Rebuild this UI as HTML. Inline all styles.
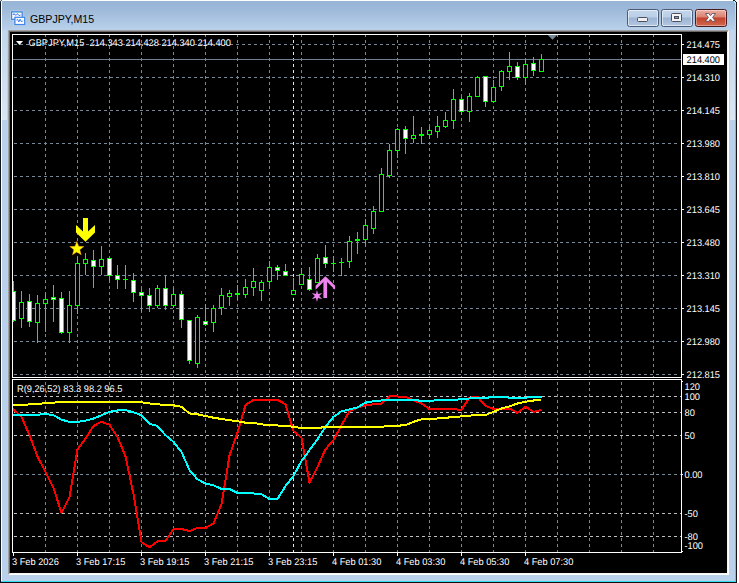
<!DOCTYPE html>
<html><head><meta charset="utf-8"><title>GBPJPY,M15</title>
<style>
html,body{margin:0;padding:0;background:#fff;}
body{width:739px;height:583px;overflow:hidden;position:relative;font-family:"Liberation Sans",Arial,sans-serif;}
#win{position:absolute;left:0;top:0;width:737px;height:583px;background:#b9d1ea;overflow:hidden;}
#tb{position:absolute;left:0;top:0;width:737px;height:30px;background:linear-gradient(#98b4d4 0px,#9cb8d8 8px,#b9d1ea 30px);}
#edgeL{position:absolute;left:0;top:2px;width:1px;bottom:0;background:#10161e;}
#edgeL2{position:absolute;left:1px;top:1px;width:1px;bottom:1px;background:#fdfeff;}
#edgeT{position:absolute;left:2px;top:0;width:731px;height:1px;background:#fdfeff;}
#edgeR{position:absolute;left:736px;top:2px;width:1px;bottom:0;background:#1a1414;}
#edgeR2{position:absolute;left:735px;top:2px;width:1px;bottom:1px;background:linear-gradient(#a8e8fa 0,#8fe2f9 30px,#3fd4f6 70px);}
#edgeB{position:absolute;left:0;top:582px;width:737px;height:1px;background:#101010;}
#edgeB2{position:absolute;left:1px;top:581px;width:735px;height:1px;background:#2fdcf2;}
#client{position:absolute;left:8px;top:30px;width:721px;height:545px;background:#000;box-sizing:border-box;border-left:1px solid #a0a0a0;border-top:1px solid #a0a0a0;border-right:1px solid #fff;border-bottom:1px solid #fff;}
#client i{position:absolute;left:0;top:0;right:0;bottom:0;border-left:1px solid #696969;border-top:1px solid #696969;border-right:1px solid #f4f4f4;border-bottom:1px solid #f4f4f4;}
#title{position:absolute;left:30px;top:8.5px;font-size:11.6px;line-height:20px;color:#000;white-space:nowrap;transform-origin:0 0;transform:scaleX(.915);}
.btn{position:absolute;top:9px;width:32px;height:18px;box-sizing:border-box;border:1px solid #4d5b76;border-radius:2.5px;background:linear-gradient(#c4d6eb 0,#bacee6 7px,#9cb4d3 8px,#b2c7e0 16px);box-shadow:inset 0 0 0 1px rgba(255,255,255,.55);}
#bmin{left:627px;} #bmax{left:661px;}
#bclose{left:695px;border-color:#4a1a22;background:linear-gradient(#eab0a2 0,#d98272 7px,#c3422a 8px,#d0694e 16px);box-shadow:inset 0 0 0 1px rgba(255,255,255,.35);}
svg{position:absolute;left:0;top:0;}
</style></head><body>
<div id="win">
<div id="tb"></div>
<div id="edgeT"></div><div id="edgeL"></div><div id="edgeL2"></div><div id="edgeR2"></div><div id="edgeR"></div><div id="edgeB2"></div><div id="edgeB"></div>
<div style="position:absolute;left:0;top:0;width:1px;height:1px;background:#cfdbe6"></div><div style="position:absolute;left:1px;top:0;width:1px;height:1px;background:#56606c"></div><div style="position:absolute;left:0;top:1px;width:1px;height:1px;background:#3a424c"></div>
<div style="position:absolute;left:733px;top:0;width:2px;height:1px;background:#121a22"></div><div style="position:absolute;left:735px;top:0;width:2px;height:2px;background:#eef2f4"></div><div style="position:absolute;left:735px;top:1px;width:1px;height:1px;background:#1a222a"></div><div style="position:absolute;left:734px;top:1px;width:1px;height:2px;background:#b5ecfb"></div>
<div id="title">GBPJPY,M15</div>
<div class="btn" id="bmin"></div><div class="btn" id="bmax"></div><div class="btn" id="bclose"></div>
<div style="position:absolute;left:2px;top:30px;width:5px;height:90px;background:linear-gradient(rgba(255,255,255,.12),rgba(255,255,255,.46))"></div><div style="position:absolute;left:730px;top:30px;width:5px;height:90px;background:linear-gradient(rgba(255,255,255,.12),rgba(255,255,255,.46))"></div>
<div id="client"><i></i></div>
</div>
<svg width="739" height="583" viewBox="0 0 739 583">
<!-- window icon -->
<g>
<rect x="10.2" y="10.6" width="13.2" height="9.8" rx="1" fill="#c8daf4" opacity=".55"/>
<rect x="13.4" y="16" width="12.6" height="9.6" rx="1" fill="#c8daf4" opacity=".55"/>
<rect x="11.6" y="11.9" width="10.6" height="7.4" fill="#fff" stroke="#3f7ef5" stroke-width="1.2"/>
<rect x="11.6" y="11.9" width="10.6" height="7.4" fill="none" stroke="#3fae86" stroke-width="1.2" stroke-dasharray="1 1.2" opacity=".45"/>
<rect x="14.9" y="17.3" width="9.8" height="7.2" fill="#fff" stroke="#3f7ef5" stroke-width="1.2"/>
<rect x="14.9" y="17.3" width="9.8" height="7.2" fill="none" stroke="#3fae86" stroke-width="1.2" stroke-dasharray="1 1.2" opacity=".45"/>
<polyline points="13,15 14,13.6 15,15 16.5,15 17.5,13.6 19,15.6 20.5,15.2" fill="none" stroke="#3f7ef5" stroke-width="1"/>
<polyline points="16.4,20 17.6,19.2 18.8,22 20.2,19.2 21.6,22 22.8,20.6" fill="none" stroke="#3f7ef5" stroke-width="1"/>
</g>
<!-- button glyphs -->
<rect x="637.5" y="17.5" width="10" height="4" rx="1" fill="#f0f0f0" stroke="#4a4e5e"/>
<rect x="671.5" y="13.5" width="10" height="8" rx="1" fill="#f4f4f4" stroke="#4a4e5e"/>
<rect x="674.5" y="16.5" width="4" height="2" fill="#7f98bd" stroke="#4a4e5e"/>
<path d="M705.5 13.5 L708.7 13.5 L710.5 15.7 L712.3 13.5 L715.5 13.5 L712.6 17.4 L715.5 21.3 L712.3 21.3 L710.5 19.1 L708.7 21.3 L705.5 21.3 L708.4 17.4 Z" fill="#fff" stroke="#5d4a58" stroke-width="0.85" stroke-linejoin="round"/>
<g shape-rendering="crispEdges">
<line x1="45.5" y1="35" x2="45.5" y2="377" stroke="#778899" stroke-dasharray="3 3" stroke-dashoffset="1"/>
<line x1="45.5" y1="380" x2="45.5" y2="552" stroke="#778899" stroke-dasharray="3 3" stroke-dashoffset="4"/>
<line x1="77.5" y1="35" x2="77.5" y2="377" stroke="#778899" stroke-dasharray="3 3" stroke-dashoffset="1"/>
<line x1="77.5" y1="380" x2="77.5" y2="552" stroke="#778899" stroke-dasharray="3 3" stroke-dashoffset="4"/>
<line x1="109.5" y1="35" x2="109.5" y2="377" stroke="#778899" stroke-dasharray="3 3" stroke-dashoffset="1"/>
<line x1="109.5" y1="380" x2="109.5" y2="552" stroke="#778899" stroke-dasharray="3 3" stroke-dashoffset="4"/>
<line x1="141.5" y1="35" x2="141.5" y2="377" stroke="#778899" stroke-dasharray="3 3" stroke-dashoffset="1"/>
<line x1="141.5" y1="380" x2="141.5" y2="552" stroke="#778899" stroke-dasharray="3 3" stroke-dashoffset="4"/>
<line x1="173.5" y1="35" x2="173.5" y2="377" stroke="#778899" stroke-dasharray="3 3" stroke-dashoffset="1"/>
<line x1="173.5" y1="380" x2="173.5" y2="552" stroke="#778899" stroke-dasharray="3 3" stroke-dashoffset="4"/>
<line x1="205.5" y1="35" x2="205.5" y2="377" stroke="#778899" stroke-dasharray="3 3" stroke-dashoffset="1"/>
<line x1="205.5" y1="380" x2="205.5" y2="552" stroke="#778899" stroke-dasharray="3 3" stroke-dashoffset="4"/>
<line x1="237.5" y1="35" x2="237.5" y2="377" stroke="#778899" stroke-dasharray="3 3" stroke-dashoffset="1"/>
<line x1="237.5" y1="380" x2="237.5" y2="552" stroke="#778899" stroke-dasharray="3 3" stroke-dashoffset="4"/>
<line x1="269.5" y1="35" x2="269.5" y2="377" stroke="#778899" stroke-dasharray="3 3" stroke-dashoffset="1"/>
<line x1="269.5" y1="380" x2="269.5" y2="552" stroke="#778899" stroke-dasharray="3 3" stroke-dashoffset="4"/>
<line x1="301.5" y1="35" x2="301.5" y2="377" stroke="#778899" stroke-dasharray="3 3" stroke-dashoffset="1"/>
<line x1="301.5" y1="380" x2="301.5" y2="552" stroke="#778899" stroke-dasharray="3 3" stroke-dashoffset="4"/>
<line x1="333.5" y1="35" x2="333.5" y2="377" stroke="#778899" stroke-dasharray="3 3" stroke-dashoffset="1"/>
<line x1="333.5" y1="380" x2="333.5" y2="552" stroke="#778899" stroke-dasharray="3 3" stroke-dashoffset="4"/>
<line x1="365.5" y1="35" x2="365.5" y2="377" stroke="#778899" stroke-dasharray="3 3" stroke-dashoffset="1"/>
<line x1="365.5" y1="380" x2="365.5" y2="552" stroke="#778899" stroke-dasharray="3 3" stroke-dashoffset="4"/>
<line x1="397.5" y1="35" x2="397.5" y2="377" stroke="#778899" stroke-dasharray="3 3" stroke-dashoffset="1"/>
<line x1="397.5" y1="380" x2="397.5" y2="552" stroke="#778899" stroke-dasharray="3 3" stroke-dashoffset="4"/>
<line x1="429.5" y1="35" x2="429.5" y2="377" stroke="#778899" stroke-dasharray="3 3" stroke-dashoffset="1"/>
<line x1="429.5" y1="380" x2="429.5" y2="552" stroke="#778899" stroke-dasharray="3 3" stroke-dashoffset="4"/>
<line x1="461.5" y1="35" x2="461.5" y2="377" stroke="#778899" stroke-dasharray="3 3" stroke-dashoffset="1"/>
<line x1="461.5" y1="380" x2="461.5" y2="552" stroke="#778899" stroke-dasharray="3 3" stroke-dashoffset="4"/>
<line x1="493.5" y1="35" x2="493.5" y2="377" stroke="#778899" stroke-dasharray="3 3" stroke-dashoffset="1"/>
<line x1="493.5" y1="380" x2="493.5" y2="552" stroke="#778899" stroke-dasharray="3 3" stroke-dashoffset="4"/>
<line x1="525.5" y1="35" x2="525.5" y2="377" stroke="#778899" stroke-dasharray="3 3" stroke-dashoffset="1"/>
<line x1="525.5" y1="380" x2="525.5" y2="552" stroke="#778899" stroke-dasharray="3 3" stroke-dashoffset="4"/>
<line x1="557.5" y1="35" x2="557.5" y2="377" stroke="#778899" stroke-dasharray="3 3" stroke-dashoffset="1"/>
<line x1="557.5" y1="380" x2="557.5" y2="552" stroke="#778899" stroke-dasharray="3 3" stroke-dashoffset="4"/>
<line x1="589.5" y1="35" x2="589.5" y2="377" stroke="#778899" stroke-dasharray="3 3" stroke-dashoffset="1"/>
<line x1="589.5" y1="380" x2="589.5" y2="552" stroke="#778899" stroke-dasharray="3 3" stroke-dashoffset="4"/>
<line x1="621.5" y1="35" x2="621.5" y2="377" stroke="#778899" stroke-dasharray="3 3" stroke-dashoffset="1"/>
<line x1="621.5" y1="380" x2="621.5" y2="552" stroke="#778899" stroke-dasharray="3 3" stroke-dashoffset="4"/>
<line x1="653.5" y1="35" x2="653.5" y2="377" stroke="#778899" stroke-dasharray="3 3" stroke-dashoffset="1"/>
<line x1="653.5" y1="380" x2="653.5" y2="552" stroke="#778899" stroke-dasharray="3 3" stroke-dashoffset="4"/>
<line x1="293.5" y1="35" x2="293.5" y2="377" stroke="#e6e6e6" stroke-dasharray="3 3" stroke-dashoffset="1"/>
<line x1="293.5" y1="380" x2="293.5" y2="552" stroke="#e6e6e6" stroke-dasharray="3 3" stroke-dashoffset="4"/>
<line x1="13" y1="44.5" x2="680" y2="44.5" stroke="#778899" stroke-dasharray="3 3" stroke-dashoffset="5"/>
<line x1="13" y1="77.5" x2="680" y2="77.5" stroke="#778899" stroke-dasharray="3 3" stroke-dashoffset="5"/>
<line x1="13" y1="110.5" x2="680" y2="110.5" stroke="#778899" stroke-dasharray="3 3" stroke-dashoffset="5"/>
<line x1="13" y1="143.5" x2="680" y2="143.5" stroke="#778899" stroke-dasharray="3 3" stroke-dashoffset="5"/>
<line x1="13" y1="176.5" x2="680" y2="176.5" stroke="#778899" stroke-dasharray="3 3" stroke-dashoffset="5"/>
<line x1="13" y1="209.5" x2="680" y2="209.5" stroke="#778899" stroke-dasharray="3 3" stroke-dashoffset="5"/>
<line x1="13" y1="242.5" x2="680" y2="242.5" stroke="#778899" stroke-dasharray="3 3" stroke-dashoffset="5"/>
<line x1="13" y1="275.5" x2="680" y2="275.5" stroke="#778899" stroke-dasharray="3 3" stroke-dashoffset="5"/>
<line x1="13" y1="308.5" x2="680" y2="308.5" stroke="#778899" stroke-dasharray="3 3" stroke-dashoffset="5"/>
<line x1="13" y1="341.5" x2="680" y2="341.5" stroke="#778899" stroke-dasharray="3 3" stroke-dashoffset="5"/>
<line x1="13" y1="374.5" x2="680" y2="374.5" stroke="#778899" stroke-dasharray="3 3" stroke-dashoffset="5"/>
<line x1="13" y1="396.5" x2="681" y2="396.5" stroke="#c0c0c0" stroke-dasharray="3 3" stroke-dashoffset="5"/>
<line x1="13" y1="412.5" x2="681" y2="412.5" stroke="#c0c0c0" stroke-dasharray="3 3" stroke-dashoffset="5"/>
<line x1="13" y1="435.5" x2="681" y2="435.5" stroke="#c0c0c0" stroke-dasharray="3 3" stroke-dashoffset="5"/>
<line x1="13" y1="474.5" x2="681" y2="474.5" stroke="#778899" stroke-dasharray="3 3" stroke-dashoffset="5"/>
<line x1="13" y1="513.5" x2="681" y2="513.5" stroke="#c0c0c0" stroke-dasharray="3 3" stroke-dashoffset="5"/>
<line x1="13" y1="536.5" x2="681" y2="536.5" stroke="#c0c0c0" stroke-dasharray="3 3" stroke-dashoffset="5"/>
<rect x="13" y="59" width="668" height="1" fill="#708090"/>
<rect x="13" y="281" width="1" height="41" fill="#00ff00"/>
<rect x="13" y="291" width="3" height="30" fill="#00ff00"/>
<rect x="13" y="292" width="2" height="28" fill="#fff"/>
<rect x="21" y="291" width="1" height="37" fill="#00ff00"/>
<rect x="19" y="302" width="5" height="17" fill="#00ff00"/>
<rect x="20" y="303" width="3" height="15" fill="#000"/>
<rect x="29" y="294" width="1" height="33" fill="#00ff00"/>
<rect x="27" y="301" width="5" height="21" fill="#00ff00"/>
<rect x="28" y="302" width="3" height="19" fill="#fff"/>
<rect x="37" y="295" width="1" height="48" fill="#00ff00"/>
<rect x="35" y="303" width="5" height="20" fill="#00ff00"/>
<rect x="36" y="304" width="3" height="18" fill="#000"/>
<rect x="45" y="293" width="1" height="39" fill="#00ff00"/>
<rect x="43" y="299" width="5" height="5" fill="#00ff00"/>
<rect x="44" y="300" width="3" height="3" fill="#000"/>
<rect x="53" y="285" width="1" height="37" fill="#00ff00"/>
<rect x="51" y="297" width="5" height="3" fill="#00ff00"/>
<rect x="52" y="298" width="3" height="1" fill="#fff"/>
<rect x="61" y="292" width="1" height="42" fill="#00ff00"/>
<rect x="59" y="298" width="5" height="35" fill="#00ff00"/>
<rect x="60" y="299" width="3" height="33" fill="#fff"/>
<rect x="69" y="291" width="1" height="52" fill="#00ff00"/>
<rect x="67" y="305" width="5" height="28" fill="#00ff00"/>
<rect x="68" y="306" width="3" height="26" fill="#000"/>
<rect x="77" y="257" width="1" height="57" fill="#00ff00"/>
<rect x="75" y="263" width="5" height="43" fill="#00ff00"/>
<rect x="76" y="264" width="3" height="41" fill="#000"/>
<rect x="85" y="253" width="1" height="22" fill="#00ff00"/>
<rect x="83" y="259" width="5" height="5" fill="#00ff00"/>
<rect x="84" y="260" width="3" height="3" fill="#000"/>
<rect x="93" y="250" width="1" height="38" fill="#00ff00"/>
<rect x="91" y="260" width="5" height="7" fill="#00ff00"/>
<rect x="92" y="261" width="3" height="5" fill="#fff"/>
<rect x="101" y="246" width="1" height="29" fill="#00ff00"/>
<rect x="99" y="259" width="5" height="8" fill="#00ff00"/>
<rect x="100" y="260" width="3" height="6" fill="#000"/>
<rect x="109" y="258" width="1" height="23" fill="#00ff00"/>
<rect x="107" y="258" width="5" height="18" fill="#00ff00"/>
<rect x="108" y="259" width="3" height="16" fill="#fff"/>
<rect x="117" y="265" width="1" height="24" fill="#00ff00"/>
<rect x="115" y="275" width="5" height="5" fill="#00ff00"/>
<rect x="116" y="276" width="3" height="3" fill="#fff"/>
<rect x="125" y="265" width="1" height="24" fill="#00ff00"/>
<rect x="123" y="279" width="5" height="1" fill="#00ff00"/>
<rect x="133" y="273" width="1" height="29" fill="#00ff00"/>
<rect x="131" y="280" width="5" height="13" fill="#00ff00"/>
<rect x="132" y="281" width="3" height="11" fill="#fff"/>
<rect x="141" y="289" width="1" height="23" fill="#00ff00"/>
<rect x="139" y="292" width="5" height="4" fill="#00ff00"/>
<rect x="140" y="293" width="3" height="2" fill="#fff"/>
<rect x="149" y="288" width="1" height="24" fill="#00ff00"/>
<rect x="147" y="295" width="5" height="11" fill="#00ff00"/>
<rect x="148" y="296" width="3" height="9" fill="#fff"/>
<rect x="157" y="285" width="1" height="23" fill="#00ff00"/>
<rect x="155" y="288" width="5" height="18" fill="#00ff00"/>
<rect x="156" y="289" width="3" height="16" fill="#000"/>
<rect x="165" y="275" width="1" height="35" fill="#00ff00"/>
<rect x="163" y="288" width="5" height="18" fill="#00ff00"/>
<rect x="164" y="289" width="3" height="16" fill="#fff"/>
<rect x="173" y="288" width="1" height="20" fill="#00ff00"/>
<rect x="171" y="294" width="5" height="12" fill="#00ff00"/>
<rect x="172" y="295" width="3" height="10" fill="#000"/>
<rect x="181" y="291" width="1" height="37" fill="#00ff00"/>
<rect x="179" y="294" width="5" height="26" fill="#00ff00"/>
<rect x="180" y="295" width="3" height="24" fill="#fff"/>
<rect x="189" y="320" width="1" height="44" fill="#00ff00"/>
<rect x="187" y="320" width="5" height="41" fill="#00ff00"/>
<rect x="188" y="321" width="3" height="39" fill="#fff"/>
<rect x="197" y="315" width="1" height="53" fill="#00ff00"/>
<rect x="195" y="317" width="5" height="47" fill="#00ff00"/>
<rect x="196" y="318" width="3" height="45" fill="#000"/>
<rect x="205" y="304" width="1" height="22" fill="#00ff00"/>
<rect x="203" y="321" width="5" height="4" fill="#00ff00"/>
<rect x="204" y="322" width="3" height="2" fill="#fff"/>
<rect x="213" y="305" width="1" height="27" fill="#00ff00"/>
<rect x="211" y="308" width="5" height="15" fill="#00ff00"/>
<rect x="212" y="309" width="3" height="13" fill="#000"/>
<rect x="221" y="288" width="1" height="27" fill="#00ff00"/>
<rect x="219" y="295" width="5" height="13" fill="#00ff00"/>
<rect x="220" y="296" width="3" height="11" fill="#000"/>
<rect x="229" y="290" width="1" height="16" fill="#00ff00"/>
<rect x="227" y="293" width="5" height="4" fill="#00ff00"/>
<rect x="228" y="294" width="3" height="2" fill="#000"/>
<rect x="237" y="285" width="1" height="15" fill="#00ff00"/>
<rect x="235" y="293" width="5" height="2" fill="#00ff00"/>
<rect x="245" y="279" width="1" height="19" fill="#00ff00"/>
<rect x="243" y="287" width="5" height="8" fill="#00ff00"/>
<rect x="244" y="288" width="3" height="6" fill="#000"/>
<rect x="253" y="268" width="1" height="28" fill="#00ff00"/>
<rect x="251" y="281" width="5" height="7" fill="#00ff00"/>
<rect x="252" y="282" width="3" height="5" fill="#000"/>
<rect x="261" y="280" width="1" height="21" fill="#00ff00"/>
<rect x="259" y="282" width="5" height="9" fill="#00ff00"/>
<rect x="260" y="283" width="3" height="7" fill="#000"/>
<rect x="269" y="261" width="1" height="28" fill="#00ff00"/>
<rect x="267" y="267" width="5" height="15" fill="#00ff00"/>
<rect x="268" y="268" width="3" height="13" fill="#000"/>
<rect x="277" y="265" width="1" height="15" fill="#00ff00"/>
<rect x="275" y="267" width="5" height="4" fill="#00ff00"/>
<rect x="276" y="268" width="3" height="2" fill="#fff"/>
<rect x="285" y="264" width="1" height="12" fill="#00ff00"/>
<rect x="283" y="271" width="5" height="5" fill="#00ff00"/>
<rect x="284" y="272" width="3" height="3" fill="#fff"/>
<rect x="293" y="278" width="1" height="17" fill="#00ff00"/>
<rect x="291" y="290" width="5" height="5" fill="#00ff00"/>
<rect x="292" y="291" width="3" height="3" fill="#000"/>
<rect x="301" y="268" width="1" height="17" fill="#00ff00"/>
<rect x="299" y="274" width="5" height="11" fill="#00ff00"/>
<rect x="300" y="275" width="3" height="9" fill="#000"/>
<rect x="309" y="267" width="1" height="24" fill="#00ff00"/>
<rect x="307" y="279" width="5" height="11" fill="#00ff00"/>
<rect x="308" y="280" width="3" height="9" fill="#fff"/>
<rect x="317" y="254" width="1" height="29" fill="#00ff00"/>
<rect x="315" y="258" width="5" height="25" fill="#00ff00"/>
<rect x="316" y="259" width="3" height="23" fill="#000"/>
<rect x="325" y="245" width="1" height="23" fill="#00ff00"/>
<rect x="323" y="257" width="5" height="7" fill="#00ff00"/>
<rect x="324" y="258" width="3" height="5" fill="#fff"/>
<rect x="333" y="256" width="1" height="16" fill="#00ff00"/>
<rect x="331" y="263" width="5" height="1" fill="#00ff00"/>
<rect x="341" y="258" width="1" height="18" fill="#00ff00"/>
<rect x="339" y="262" width="5" height="1" fill="#00ff00"/>
<rect x="349" y="236" width="1" height="32" fill="#00ff00"/>
<rect x="347" y="241" width="5" height="21" fill="#00ff00"/>
<rect x="348" y="242" width="3" height="19" fill="#000"/>
<rect x="357" y="232" width="1" height="22" fill="#00ff00"/>
<rect x="355" y="239" width="5" height="2" fill="#00ff00"/>
<rect x="365" y="219" width="1" height="26" fill="#00ff00"/>
<rect x="363" y="225" width="5" height="15" fill="#00ff00"/>
<rect x="364" y="226" width="3" height="13" fill="#000"/>
<rect x="373" y="206" width="1" height="28" fill="#00ff00"/>
<rect x="371" y="211" width="5" height="18" fill="#00ff00"/>
<rect x="372" y="212" width="3" height="16" fill="#000"/>
<rect x="381" y="168" width="1" height="44" fill="#00ff00"/>
<rect x="379" y="174" width="5" height="38" fill="#00ff00"/>
<rect x="380" y="175" width="3" height="36" fill="#000"/>
<rect x="389" y="144" width="1" height="34" fill="#00ff00"/>
<rect x="387" y="150" width="5" height="26" fill="#00ff00"/>
<rect x="388" y="151" width="3" height="24" fill="#000"/>
<rect x="397" y="128" width="1" height="30" fill="#00ff00"/>
<rect x="395" y="129" width="5" height="22" fill="#00ff00"/>
<rect x="396" y="130" width="3" height="20" fill="#000"/>
<rect x="405" y="126" width="1" height="28" fill="#00ff00"/>
<rect x="403" y="129" width="5" height="10" fill="#00ff00"/>
<rect x="404" y="130" width="3" height="8" fill="#fff"/>
<rect x="413" y="116" width="1" height="27" fill="#00ff00"/>
<rect x="411" y="135" width="5" height="4" fill="#00ff00"/>
<rect x="412" y="136" width="3" height="2" fill="#000"/>
<rect x="421" y="127" width="1" height="17" fill="#00ff00"/>
<rect x="419" y="134" width="5" height="2" fill="#00ff00"/>
<rect x="429" y="127" width="1" height="12" fill="#00ff00"/>
<rect x="427" y="130" width="5" height="5" fill="#00ff00"/>
<rect x="428" y="131" width="3" height="3" fill="#000"/>
<rect x="437" y="116" width="1" height="22" fill="#00ff00"/>
<rect x="435" y="126" width="5" height="6" fill="#00ff00"/>
<rect x="436" y="127" width="3" height="4" fill="#000"/>
<rect x="445" y="112" width="1" height="16" fill="#00ff00"/>
<rect x="443" y="120" width="5" height="7" fill="#00ff00"/>
<rect x="444" y="121" width="3" height="5" fill="#000"/>
<rect x="453" y="89" width="1" height="40" fill="#00ff00"/>
<rect x="451" y="99" width="5" height="22" fill="#00ff00"/>
<rect x="452" y="100" width="3" height="20" fill="#000"/>
<rect x="461" y="97" width="1" height="18" fill="#00ff00"/>
<rect x="459" y="99" width="5" height="13" fill="#00ff00"/>
<rect x="460" y="100" width="3" height="11" fill="#fff"/>
<rect x="469" y="93" width="1" height="29" fill="#00ff00"/>
<rect x="467" y="96" width="5" height="16" fill="#00ff00"/>
<rect x="468" y="97" width="3" height="14" fill="#000"/>
<rect x="477" y="76" width="1" height="21" fill="#00ff00"/>
<rect x="475" y="77" width="5" height="20" fill="#00ff00"/>
<rect x="476" y="78" width="3" height="18" fill="#000"/>
<rect x="485" y="76" width="1" height="31" fill="#00ff00"/>
<rect x="483" y="76" width="5" height="26" fill="#00ff00"/>
<rect x="484" y="77" width="3" height="24" fill="#fff"/>
<rect x="493" y="80" width="1" height="23" fill="#00ff00"/>
<rect x="491" y="87" width="5" height="15" fill="#00ff00"/>
<rect x="492" y="88" width="3" height="13" fill="#000"/>
<rect x="501" y="70" width="1" height="21" fill="#00ff00"/>
<rect x="499" y="71" width="5" height="16" fill="#00ff00"/>
<rect x="500" y="72" width="3" height="14" fill="#000"/>
<rect x="509" y="52" width="1" height="28" fill="#00ff00"/>
<rect x="507" y="66" width="5" height="6" fill="#00ff00"/>
<rect x="508" y="67" width="3" height="4" fill="#000"/>
<rect x="517" y="62" width="1" height="18" fill="#00ff00"/>
<rect x="515" y="66" width="5" height="12" fill="#00ff00"/>
<rect x="516" y="67" width="3" height="10" fill="#fff"/>
<rect x="525" y="59" width="1" height="26" fill="#00ff00"/>
<rect x="523" y="64" width="5" height="14" fill="#00ff00"/>
<rect x="524" y="65" width="3" height="12" fill="#000"/>
<rect x="533" y="57" width="1" height="19" fill="#00ff00"/>
<rect x="531" y="63" width="5" height="8" fill="#00ff00"/>
<rect x="532" y="64" width="3" height="6" fill="#fff"/>
<rect x="541" y="54" width="1" height="18" fill="#00ff00"/>
<rect x="539" y="59" width="5" height="13" fill="#00ff00"/>
<rect x="540" y="60" width="3" height="11" fill="#000"/>
<polyline points="13,409.3 13.5,409.3 21.5,416.8 29.5,435.2 37.5,456.5 45.5,472 53.5,487.7 61.5,513.0 69.5,496.8 77.5,449.5 85.5,438.5 93.5,426 101.5,421.8 109.5,424.8 117.5,436.8 125.5,456.5 133.5,494 141.5,542.3 149.5,547.3 157.5,541.3 165.5,541 173.5,529 181.5,529 189.5,531 197.5,528 205.5,528 213.5,523.5 221.5,504.3 229.5,455.5 237.5,432.7 245.5,405 253.5,399.8 261.5,399.8 269.5,399.8 277.5,399.8 285.5,404.3 293.5,431 301.5,437.7 309.5,482.7 317.5,467 325.5,449.3 333.5,440.2 341.5,425.2 349.5,411.3 357.5,407.7 365.5,405.2 373.5,404.3 381.5,403.8 389.5,396.3 397.5,396.5 405.5,396.8 413.5,400.2 421.5,403.5 429.5,409 437.5,409 445.5,409 453.5,409.3 461.5,409.8 469.5,397.7 477.5,396.8 485.5,406 493.5,408.8 501.5,408.8 509.5,408.5 517.5,413 525.5,406.8 533.5,411.8 541.5,409.8" fill="none" stroke="#ff0000" stroke-width="2" stroke-linejoin="round"/>
<polyline points="13,415.2 13.5,415.2 21.5,415.2 29.5,415.2 37.5,414.8 45.5,414 53.5,415.2 61.5,419.7 69.5,421.8 77.5,421.8 85.5,420.7 93.5,418.5 101.5,415.2 109.5,411.8 117.5,410.5 125.5,410.2 133.5,412.3 141.5,415.2 149.5,423.8 157.5,426 165.5,435.2 173.5,441.8 181.5,452 189.5,470 197.5,479.3 205.5,483.5 213.5,485.2 221.5,489 229.5,489 237.5,493 245.5,493 253.5,493.5 261.5,494.3 269.5,499 277.5,499 285.5,486 293.5,476 301.5,461 309.5,450.2 317.5,439.3 325.5,426.8 333.5,416.8 341.5,411.3 349.5,409.3 357.5,407.3 365.5,402.7 373.5,401.3 381.5,400.5 389.5,399.7 397.5,399.7 405.5,399.7 413.5,399.7 421.5,401 429.5,401 437.5,400.2 445.5,399.8 453.5,399.8 461.5,399.3 469.5,398.5 477.5,398.2 485.5,397.7 493.5,397.2 501.5,396.8 509.5,397.7 517.5,397.7 525.5,397.7 533.5,396.8 541.5,396.8" fill="none" stroke="#00ffff" stroke-width="2" stroke-linejoin="round"/>
<polyline points="13,405.2 13.5,405.2 21.5,405.0 29.5,404.4 37.5,403.9 45.5,403.2 53.5,402.6 61.5,402 69.5,401.8 77.5,401.8 85.5,401.8 93.5,401.8 101.5,401.8 109.5,401.8 117.5,401.8 125.5,401.8 133.5,401.8 141.5,402.2 149.5,403.5 157.5,404.3 165.5,405 173.5,405.3 181.5,406.8 189.5,413.5 197.5,414.3 205.5,416 213.5,417.7 221.5,419 229.5,420.2 237.5,421.3 245.5,422.7 253.5,423 261.5,424.3 269.5,425.2 277.5,425.5 285.5,426 293.5,426.8 301.5,428 309.5,428.2 317.5,428.2 325.5,426.8 333.5,426.8 341.5,426.8 349.5,426.8 357.5,426.8 365.5,426.8 373.5,426.8 381.5,426.8 389.5,426 397.5,425.7 405.5,425.2 413.5,421.8 421.5,419.3 429.5,419 437.5,418.5 445.5,417.7 453.5,417.2 461.5,416.3 469.5,415.7 477.5,414.8 485.5,415 493.5,411.8 501.5,408.5 509.5,406.3 517.5,403.5 525.5,401.8 533.5,400.5 541.5,400.2" fill="none" stroke="#ffff00" stroke-width="2" stroke-linejoin="round"/>
<rect x="12" y="34" width="670" height="1" fill="#fff"/>
<rect x="12" y="34" width="1" height="344" fill="#fff"/>
<rect x="681" y="34" width="1" height="344" fill="#fff"/>
<rect x="12" y="377" width="670" height="1" fill="#fff"/>
<rect x="12" y="379" width="670" height="1" fill="#fff"/>
<rect x="12" y="379" width="1" height="174" fill="#fff"/>
<rect x="681" y="379" width="1" height="174" fill="#fff"/>
<rect x="12" y="552" width="670" height="1" fill="#fff"/>
<rect x="682" y="44" width="2" height="1" fill="#fff"/>
<rect x="682" y="77" width="2" height="1" fill="#fff"/>
<rect x="682" y="110" width="2" height="1" fill="#fff"/>
<rect x="682" y="143" width="2" height="1" fill="#fff"/>
<rect x="682" y="176" width="2" height="1" fill="#fff"/>
<rect x="682" y="209" width="2" height="1" fill="#fff"/>
<rect x="682" y="242" width="2" height="1" fill="#fff"/>
<rect x="682" y="275" width="2" height="1" fill="#fff"/>
<rect x="682" y="308" width="2" height="1" fill="#fff"/>
<rect x="682" y="341" width="2" height="1" fill="#fff"/>
<rect x="682" y="374" width="2" height="1" fill="#fff"/>
<rect x="682" y="381" width="1" height="1" fill="#fff"/>
<rect x="682" y="474" width="1" height="1" fill="#fff"/>
<rect x="682" y="551" width="1" height="1" fill="#fff"/>
<rect x="13" y="553" width="1" height="3" fill="#fff"/>
<rect x="77" y="553" width="1" height="3" fill="#fff"/>
<rect x="141" y="553" width="1" height="3" fill="#fff"/>
<rect x="205" y="553" width="1" height="3" fill="#fff"/>
<rect x="269" y="553" width="1" height="3" fill="#fff"/>
<rect x="333" y="553" width="1" height="3" fill="#fff"/>
<rect x="397" y="553" width="1" height="3" fill="#fff"/>
<rect x="461" y="553" width="1" height="3" fill="#fff"/>
<rect x="525" y="553" width="1" height="3" fill="#fff"/>
<rect x="683" y="54" width="41" height="11" fill="#fff"/>
</g>
<polygon points="547.8,35 557.2,35 552.5,39.8" fill="#778899"/>
<polygon points="16,41 23,41 19.5,45" fill="#fff"/>
<polygon points="83,218 88,218 88,231.5 95,225 95,232.5 85.5,241.8 76,232.5 76,225 83,231.5" fill="#ffff00"/>
<polygon points="76.85,241.45 78.67,246.34 83.89,246.56 79.80,249.81 81.20,254.84 76.85,251.95 72.50,254.84 73.90,249.81 69.81,246.56 75.03,246.34" fill="#ffff00" stroke="#ff9a00" stroke-width="0.5"/>
<polygon points="325.4,276.3 335.1,285.8 335.1,289.7 327.1,282 327.1,298 323.4,298 323.4,282 315.6,289.7 315.6,285.8" fill="#ee82ee"/>
<polygon points="317.00,290.00 318.10,294.09 322.20,293.00 319.20,296.00 322.20,299.00 318.10,297.91 317.00,302.00 315.90,297.91 311.80,299.00 314.80,296.00 311.80,293.00 315.90,294.09" fill="#ee82ee"/>
<g font-family="Liberation Sans, Arial, sans-serif" font-size="9.75" text-rendering="geometricPrecision">
<text transform="translate(28.5,46.2) scale(.948,1)" fill="#fff" xml:space="preserve">GBPJPY,M15&#160; 214.343 214.428 214.340 214.400</text>
<text transform="translate(17,392.2) scale(.948,1)" fill="#fff" >R(9,26,52) 83.3 98.2 96.5</text>
<text transform="translate(686.6,48.2) scale(.948,1)" fill="#fff" >214.475</text>
<text transform="translate(686.6,81.2) scale(.948,1)" fill="#fff" >214.310</text>
<text transform="translate(686.6,114.2) scale(.948,1)" fill="#fff" >214.145</text>
<text transform="translate(686.6,147.2) scale(.948,1)" fill="#fff" >213.980</text>
<text transform="translate(686.6,180.2) scale(.948,1)" fill="#fff" >213.810</text>
<text transform="translate(686.6,213.2) scale(.948,1)" fill="#fff" >213.645</text>
<text transform="translate(686.6,246.2) scale(.948,1)" fill="#fff" >213.480</text>
<text transform="translate(686.6,279.2) scale(.948,1)" fill="#fff" >213.310</text>
<text transform="translate(686.6,312.2) scale(.948,1)" fill="#fff" >213.145</text>
<text transform="translate(686.6,345.2) scale(.948,1)" fill="#fff" >212.980</text>
<text transform="translate(686.6,378.2) scale(.948,1)" fill="#fff" >212.815</text>
<text transform="translate(686.6,63.2) scale(.948,1)" fill="#000" >214.400</text>
<text transform="translate(684.5,390.2) scale(.948,1)" fill="#fff" >120</text>
<text transform="translate(684.5,400.2) scale(.948,1)" fill="#fff" >100</text>
<text transform="translate(684.5,416.2) scale(.948,1)" fill="#fff" >80</text>
<text transform="translate(684.5,439.2) scale(.948,1)" fill="#fff" >50</text>
<text transform="translate(684.5,478.2) scale(.948,1)" fill="#fff" >0.00</text>
<text transform="translate(684.5,517.2) scale(.948,1)" fill="#fff" >-50</text>
<text transform="translate(684.5,540.2) scale(.948,1)" fill="#fff" >-80</text>
<text transform="translate(684.5,548.8) scale(.948,1)" fill="#fff" >-100</text>
<text transform="translate(12,564.8) scale(.948,1)" fill="#fff" >3 Feb 2026</text>
<text transform="translate(76,564.8) scale(.948,1)" fill="#fff" >3 Feb 17:15</text>
<text transform="translate(140,564.8) scale(.948,1)" fill="#fff" >3 Feb 19:15</text>
<text transform="translate(204,564.8) scale(.948,1)" fill="#fff" >3 Feb 21:15</text>
<text transform="translate(268,564.8) scale(.948,1)" fill="#fff" >3 Feb 23:15</text>
<text transform="translate(332,564.8) scale(.948,1)" fill="#fff" >4 Feb 01:30</text>
<text transform="translate(396,564.8) scale(.948,1)" fill="#fff" >4 Feb 03:30</text>
<text transform="translate(460,564.8) scale(.948,1)" fill="#fff" >4 Feb 05:30</text>
<text transform="translate(524,564.8) scale(.948,1)" fill="#fff" >4 Feb 07:30</text>
</g>
</svg>
</body></html>
